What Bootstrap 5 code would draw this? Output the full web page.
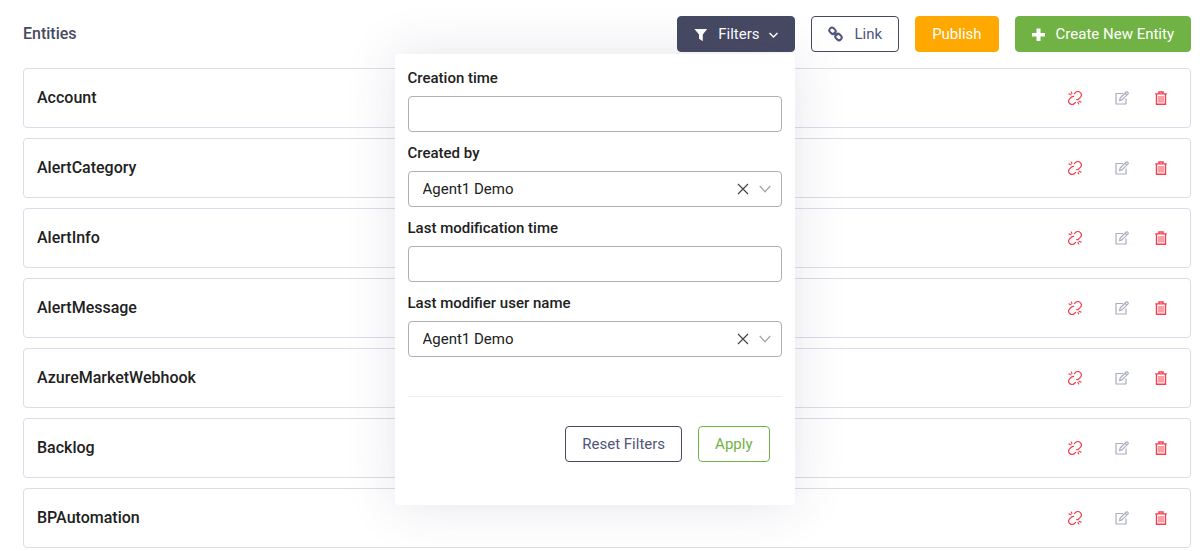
<!DOCTYPE html>
<html lang="en">
<head>
<meta charset="utf-8">
<meta name="viewport" content="width=device-width, initial-scale=1">
<title>Entities</title>
<link rel="stylesheet" href="https://cdn.jsdelivr.net/npm/bootstrap@5.3.0/dist/css/bootstrap.min.css">
<style>
  body { font-family: Roboto, "Liberation Sans", sans-serif; font-size: 15px; line-height: 20px; color: #212121; }
  .page { padding: 16px 12px 0 23px; }
  .page-title { font-size: 16px; line-height: 20px; font-weight: 500; color: #464962; }
  .btn { --bs-btn-font-size: 15px; --bs-btn-line-height: 20px; --bs-btn-padding-x: 16px; --bs-btn-padding-y: 7px; --bs-btn-border-radius: 4px; height: 36px; }
  .btn-slate { --bs-btn-color: #fff; --bs-btn-bg: #464962; --bs-btn-border-color: #464962; --bs-btn-hover-color: #fff; --bs-btn-hover-bg: #3a3d54; }
  .btn-outline-slate { --bs-btn-color: #51557a; --bs-btn-border-color: #464962; --bs-btn-bg: #fff; --bs-btn-hover-bg: #464962; --bs-btn-hover-color: #fff; }
  .btn-amber { --bs-btn-color: #fff; --bs-btn-bg: #ffa800; --bs-btn-border-color: #ffa800; --bs-btn-hover-color: #fff; --bs-btn-hover-bg: #e69700; }
  .btn-leaf { --bs-btn-color: #fff; --bs-btn-bg: #70b244; --bs-btn-border-color: #70b244; --bs-btn-hover-color: #fff; --bs-btn-hover-bg: #5f9b38; }
  .btn-outline-leaf { --bs-btn-color: #70b244; --bs-btn-border-color: #70b244; --bs-btn-bg: #fff; --bs-btn-hover-bg: #70b244; --bs-btn-hover-color: #fff; }
  .btn svg { flex: none; }
  .entity-list { margin-top: 16px; gap: 10px; }
  .entity { min-height: 60px; padding: 0 22px 0 13px; border: 1px solid #dcdce9; border-radius: 4px; }
  .entity-name { font-size: 16px; line-height: 20px; font-weight: 500; color: #212121; }
  .entity-actions { gap: 25px; }
  .icon-btn { display: flex; padding: 0; border: 0; background: none; }
  .tone-red { color: #f6404f; }
  .tone-grey { color: #a9adbd; }
  .unlink { margin-right: 8px; }
  .filter-menu { width: 400px; padding: 14px 13px 43px; border: 0; border-radius: 4px; box-shadow: 0 0 50px 0 rgba(82, 63, 105, .15); }
  .filter-menu.dropdown-menu[data-bs-popper] { margin-top: 2px; }
  .filter-field { margin-bottom: 11px; }
  .filter-field .form-label { margin-bottom: 8px; font-size: 15px; line-height: 20px; font-weight: 500; color: #212121; }
  .filter-field .form-control, .filter-field .form-select { height: 36px; padding: 7px 15px 7px 14px; font-size: 15px; line-height: 20px; border: 1px solid #b0b0b0; border-radius: 4px; color: #212121; }
  .filter-field .form-select { background-image: url("data:image/svg+xml,%3csvg xmlns='http://www.w3.org/2000/svg' viewBox='0 0 12 12'%3e%3cpath fill='none' stroke='%23a6a6a6' stroke-width='1.3' d='M.7 3 6 8.7 11.3 3'/%3e%3c/svg%3e"); background-size: 12px 12px; background-position: right 10px center; }
  .clear-btn { right: 33px; color: #444; }
  .filter-rule { margin: 39px 0 29px; border-color: #ebedf3; opacity: 1; }
  .filter-footer { padding-right: 12px; }
</style>
</head>
<body>
<svg width="0" height="0" class="position-absolute" aria-hidden="true">
  <symbol id="i-unlink" viewBox="0 0 14 14">
    <g fill="none" stroke="currentColor" stroke-width="1.2" stroke-linecap="round">
      <path d="M6.400 2.700 7.500 1.500C8.900.3 11 .3 12.300 1.700s1.300 3.400 0 4.700L10.400 8.200C9.800 8.700 9.200 8.800 8.500 8.700"/>
      <path d="M5.600 5.400C4.900 5.300 4.200 5.500 3.600 6L1.700 7.800C.4 9.100.4 11.200 1.700 12.500s3.400 1.300 4.700 0L7.600 11.300"/>
      <path d="M1 2.900l2 .8M3.300 1l.6 1.500M11 10.300l2 .8M10 11.500l.7 1.500"/>
    </g>
  </symbol>
  <symbol id="i-edit" viewBox="0 0 14 14">
    <g fill="none" stroke="currentColor" stroke-width="1.200" stroke-linejoin="round">
      <path d="M8 2.500H1v10.500h10V7.500"/>
      <path d="M4.500 9.700 5.200 7 11.200 1q.6-.5 1.200 0l.6.600q.5.600 0 1.200L7 8.900zM10 2.200l1.800 1.800"/>
    </g>
  </symbol>
  <symbol id="i-trash" viewBox="0 0 14 14">
    <g fill="none" stroke="currentColor" stroke-width="1.400">
      <path d="M1.200 2.900h11.600M5 2.800V1h4v1.800M2.500 3v10.200h9V3"/>
      <path stroke-width="1" d="M5 5v6.500M7 5v6.500M9 5v6.500"/>
    </g>
  </symbol>
</svg>

<main class="page">
  <header class="d-flex align-items-center justify-content-between">
    <h1 class="page-title mb-0">Entities</h1>
    <div class="d-flex gap-3">
      <div class="dropdown">
        <button type="button" class="btn btn-slate d-flex align-items-center" aria-expanded="true">
          <svg class="me-2" width="16" height="16" viewBox="0 0 16 16" aria-hidden="true"><path fill="currentColor" d="M.4 3h12.800L8.800 8.500v6.700L5 12.800V8.500z"/></svg>
          <span>Filters</span>
          <svg class="ms-2" width="10" height="12" viewBox="0 0 10 12" aria-hidden="true"><path fill="none" stroke="currentColor" stroke-width="1.500" d="m1.500 5 4 4 4-4"/></svg>
        </button>
        <form class="dropdown-menu dropdown-menu-end filter-menu show" data-bs-popper="static">
          <div class="filter-field">
            <label class="form-label d-block" for="created-at">Creation time</label>
            <input class="form-control" type="text" id="created-at">
          </div>
          <div class="filter-field">
            <label class="form-label d-block" for="created-by">Created by</label>
            <div class="position-relative d-flex align-items-center">
              <select class="form-select" id="created-by"><option>Agent1 Demo</option></select>
              <button type="button" class="icon-btn clear-btn position-absolute" aria-label="Clear created by"><svg width="12" height="12" viewBox="0 0 12 12" aria-hidden="true"><path fill="none" stroke="currentColor" stroke-width="1.200" d="m1 1 10 10M11 1 1 11"/></svg></button>
            </div>
          </div>
          <div class="filter-field">
            <label class="form-label d-block" for="modified-at">Last modification time</label>
            <input class="form-control" type="text" id="modified-at">
          </div>
          <div class="filter-field mb-0">
            <label class="form-label d-block" for="modified-by">Last modifier user name</label>
            <div class="position-relative d-flex align-items-center">
              <select class="form-select" id="modified-by"><option>Agent1 Demo</option></select>
              <button type="button" class="icon-btn clear-btn position-absolute" aria-label="Clear last modifier"><svg width="12" height="12" viewBox="0 0 12 12" aria-hidden="true"><path fill="none" stroke="currentColor" stroke-width="1.200" d="m1 1 10 10M11 1 1 11"/></svg></button>
            </div>
          </div>
          <hr class="filter-rule">
          <div class="filter-footer d-flex justify-content-end gap-3">
            <button type="reset" class="btn btn-outline-slate">Reset Filters</button>
            <button type="submit" class="btn btn-outline-leaf">Apply</button>
          </div>
        </form>
      </div>
      <button type="button" class="btn btn-outline-slate d-flex align-items-center">
        <svg class="me-2" width="19" height="16" viewBox="0 0 19 16" aria-hidden="true"><g fill="none" stroke="currentColor" stroke-width="2"><rect x="1.200" y="2.200" width="6.600" height="5.200" rx="2.400" transform="rotate(45 4.500 4.800)"/><rect x="7.200" y="8.400" width="6.600" height="5.200" rx="2.400" transform="rotate(45 10.500 11)"/><path d="m5.800 6.200 3.500 3.500"/></g></svg>
        <span>Link</span>
      </button>
      <button type="button" class="btn btn-amber">Publish</button>
      <button type="button" class="btn btn-leaf d-flex align-items-center">
        <svg class="me-2" width="16" height="16" viewBox="0 0 16 16" aria-hidden="true"><path fill="currentColor" d="M4.500 2.500h4v4.500H13v3.500H8.500v4.500h-4v-4.500H0V7h4.500z"/></svg>
        <span>Create New Entity</span>
      </button>
    </div>
  </header>

  <ul class="entity-list list-unstyled d-flex flex-column mb-0" id="entity-list"></ul>
</main>

<script src="https://cdn.jsdelivr.net/npm/bootstrap@5.3.0/dist/js/bootstrap.bundle.min.js"></script>
<script>
  const entities = ['Account', 'AlertCategory', 'AlertInfo', 'AlertMessage', 'AzureMarketWebhook', 'Backlog', 'BPAutomation'];
  const action = (icon, tone, label) =>
    `<button type="button" class="icon-btn ${tone}" aria-label="${label}"><svg width="14" height="14" aria-hidden="true"><use href="#i-${icon}"/></svg></button>`;
  document.getElementById('entity-list').innerHTML = entities.map(name => `
    <li class="entity d-flex align-items-center justify-content-between">
      <span class="entity-name">${name}</span>
      <div class="entity-actions d-flex align-items-center">
        ${action('unlink', 'tone-red unlink', 'Unlink ' + name)}
        ${action('edit', 'tone-grey', 'Edit ' + name)}
        ${action('trash', 'tone-red', 'Delete ' + name)}
      </div>
    </li>`).join('');
</script>
</body>
</html>
